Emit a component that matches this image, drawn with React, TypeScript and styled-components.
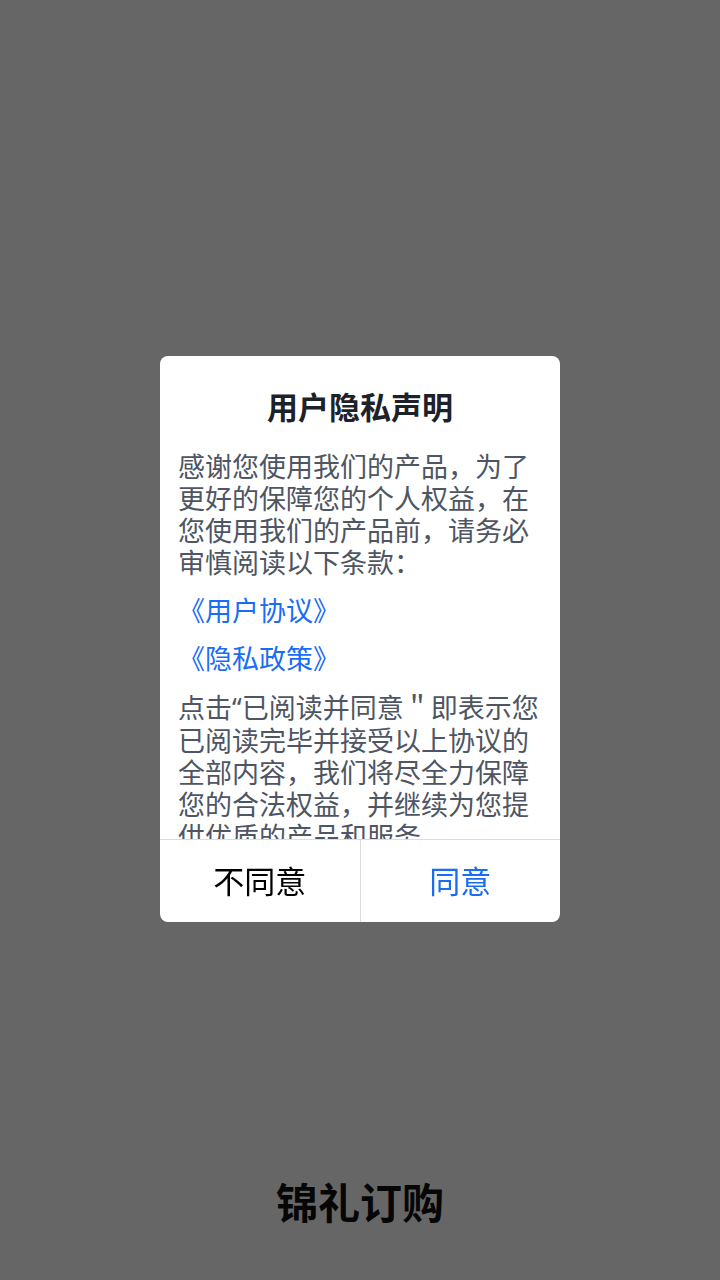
import React from "react";
import styled, { createGlobalStyle } from "styled-components";

const GlobalStyle = createGlobalStyle`
  html, body {
    margin: 0;
    padding: 0;
    background: #ffffff;
    font-family: "Noto Sans CJK SC", "Noto Sans", sans-serif;
  }
`;

const Page = styled.div`
  width: 720px;
  height: 1280px;
  display: flex;
  flex-direction: column;
  justify-content: flex-end;
  align-items: center;
  box-sizing: border-box;
  padding-bottom: 51px;
`;

const Brand = styled.div`
  font-size: 42px;
  font-weight: 700;
  line-height: 56px;
  color: #111111;
`;

const Mask = styled.div`
  position: fixed;
  inset: 0;
  background: rgba(0, 0, 0, 0.6);
  display: flex;
  justify-content: center;
  padding-top: 356px;
  box-sizing: border-box;
`;

const Dialog = styled.div`
  width: 400px;
  height: 566px;
  background: #ffffff;
  border-radius: 8px;
  display: flex;
  flex-direction: column;
  overflow: hidden;
`;

const Scroller = styled.div`
  flex: 1;
  overflow: hidden;
  padding: 30px 18px 0;
`;

const Title = styled.div`
  font-size: 31px;
  font-weight: 700;
  line-height: 40px;
  text-align: center;
  color: #1d2129;
  margin-bottom: 24px;
`;

const Para = styled.p`
  margin: 0;
  font-size: 27px;
  line-height: 32px;
  color: #4e5563;
`;

const Quote = styled.span`
  font-family: "Noto Sans", sans-serif;
`;

const DocLink = styled.a`
  display: block;
  margin-top: 16px;
  font-size: 27px;
  line-height: 32px;
  color: #1a6cf5;
  text-decoration: none;
`;

const LastPara = styled(Para)`
  margin-top: 17px;
`;

const Actions = styled.div`
  height: 82px;
  border-top: 1px solid #dcdcdc;
  display: flex;
`;

const ActionButton = styled.button<{ $primary?: boolean }>`
  flex: 1;
  border: none;
  background: transparent;
  font-family: inherit;
  font-size: 31px;
  line-height: 40px;
  color: ${(p) => (p.$primary ? "#1a6cf5" : "#000000")};
  padding: 0 0 2px;
  & + & {
    border-left: 1px solid #dcdcdc;
  }
`;

export default function App() {
  return (
    <>
      <GlobalStyle />
      <Page>
        <Brand>锦礼订购</Brand>
      </Page>
      <Mask>
        <Dialog>
          <Scroller>
            <Title>用户隐私声明</Title>
            <Para>
              感谢您使用我们的产品，为了更好的保障您的个人权益，在您使用我们的产品前，请务必审慎阅读以下条款：
            </Para>
            <DocLink href="#">《用户协议》</DocLink>
            <DocLink href="#">《隐私政策》</DocLink>
            <LastPara>
              点击<Quote>“</Quote>已阅读并同意＂即表示您已阅读完毕并接受以上协议的全部内容，我们将尽全力保障您的合法权益，并继续为您提供优质的产品和服务。
            </LastPara>
          </Scroller>
          <Actions>
            <ActionButton>不同意</ActionButton>
            <ActionButton $primary>同意</ActionButton>
          </Actions>
        </Dialog>
      </Mask>
    </>
  );
}
